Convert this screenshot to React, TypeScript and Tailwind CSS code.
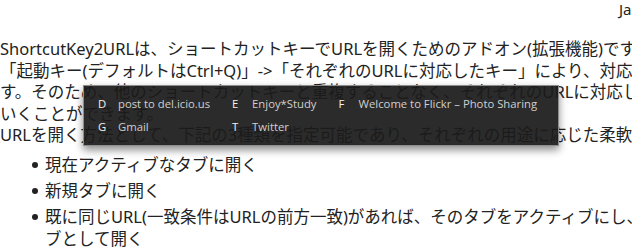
import React from "react";

const shortcuts = [
  { key: "D", label: "post to del.icio.us" },
  { key: "E", label: "Enjoy*Study" },
  { key: "F", label: "Welcome to Flickr – Photo Sharing" },
  { key: "G", label: "Gmail" },
  { key: "T", label: "Twitter" },
];

const bullet =
  "relative before:content-[''] before:absolute before:left-[-13px] before:top-[8px] before:w-[6px] before:h-[6px] before:rounded-full before:bg-[#222]";

export default function App() {
  return (
    <div className="relative w-[632px] h-[251px] overflow-hidden bg-white text-[#222] font-['Noto_Sans','Noto_Sans_CJK_JP',sans-serif]">
      {/* cut-off header */}
      <div className="h-[38px] pl-[619px] text-[15px] leading-[18px] whitespace-nowrap">Japanese</div>

      <div className="text-[16.5px] leading-[21.5px] whitespace-nowrap">
        <p>ShortcutKey2URLは、ショートカットキーでURLを開くためのアドオン(拡張機能)です。</p>
        <p>「起動キー(デフォルトはCtrl+Q)」-&gt;「それぞれのURLに対応したキー」により、対応するURLを開きま</p>
        <p>す。そのため、他のショートカットキーと重複することなく、それぞれのURLに対応したキーを割り当てて</p>
        <p>いくことができます。</p>
        <p>URLを開く方法として、下記の3種類を指定可能であり、それぞれの用途に応じた柔軟な設定が可能です。</p>
      </div>

      <ul className="mt-[8px] pl-[45px] text-[16.5px] leading-[22px] whitespace-nowrap">
        <li className={`${bullet} mb-[4px]`}>現在アクティブなタブに開く</li>
        <li className={`${bullet} mb-[4px]`}>新規タブに開く</li>
        <li className={bullet}>
          既に同じURL(一致条件はURLの前方一致)があれば、そのタブをアクティブにし、なければ新規タ
          <br />
          ブとして開く
        </li>
      </ul>

      {/* shortcut popup */}
      <div className="absolute left-[83px] top-[85px] w-[476px] h-[61px] bg-[rgba(27,27,27,0.93)] border border-[#8d8d8d] shadow-[0_4px_8px_rgba(0,0,0,0.45)] pl-[14px] pt-[10px] font-['Open_Sans',sans-serif] text-[11.3px] leading-[16px]">
        <div className="grid grid-cols-[auto_auto_auto] justify-start gap-x-[22px] gap-y-[7px]">
          {shortcuts.map((s) => (
            <div key={s.key} className="flex whitespace-nowrap">
              <span className="w-[20px] text-[#f2f2f2]">{s.key}</span>
              <span className="text-[#cfcfcf]">{s.label}</span>
            </div>
          ))}
        </div>
      </div>
    </div>
  );
}
